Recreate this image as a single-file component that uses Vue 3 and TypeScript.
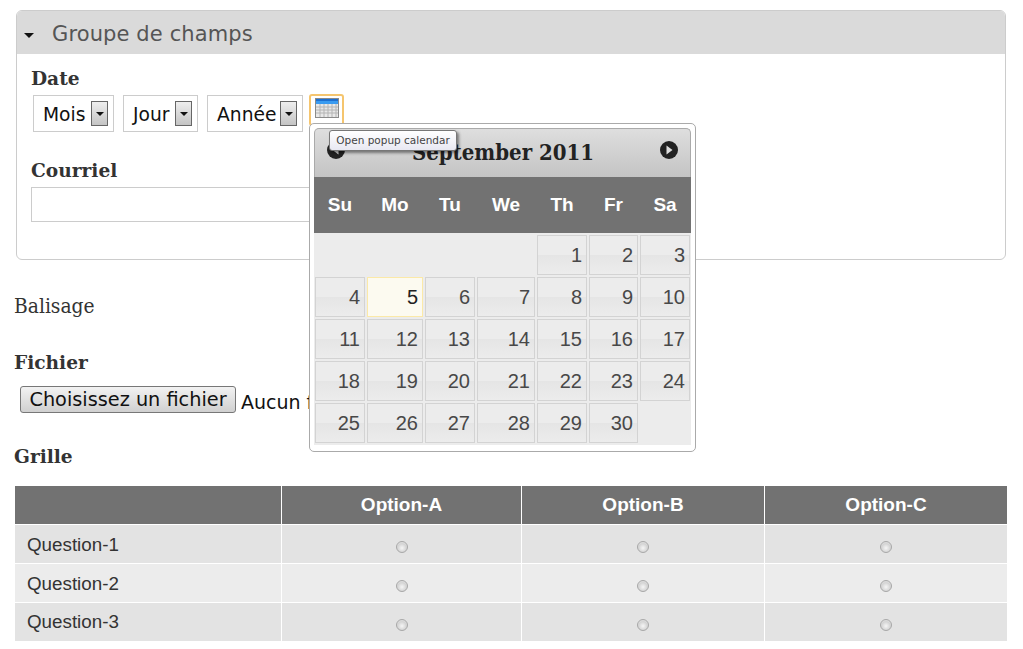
<script setup lang="ts">
const selects = ['Mois', 'Jour', 'Année']
const weekDays = ['Su', 'Mo', 'Tu', 'We', 'Th', 'Fr', 'Sa']
const leading = [1, 2, 3, 4]
const days = Array.from({ length: 30 }, (_, i) => i + 1)
const options = ['Option-A', 'Option-B', 'Option-C']
const questions = ['Question-1', 'Question-2', 'Question-3']
</script>

<template>
  <div class="page">
    <section class="group">
      <header class="group-head">
        <span class="caret"></span>
        <span class="group-title">Groupe de champs</span>
      </header>
      <div class="group-body">
        <div class="label date-label">Date</div>
        <div class="date-row">
          <div v-for="s in selects" :key="s" class="select">
            <span class="select-text">{{ s }}</span>
            <span class="select-btn"><i></i></span>
          </div>
          <button class="cal-btn" type="button" aria-label="Open popup calendar">
            <svg width="24" height="20" viewBox="0 0 24 20">
              <rect x="0.5" y="0.5" width="23" height="19" fill="#e8e8e8" stroke="#8a8a8a" />
              <rect x="1" y="1" width="22" height="5" fill="#3a9bf0" />
              <rect x="1" y="1" width="22" height="2" fill="#1c6fd0" />
              <path
                d="M5 6v13M9 6v13M13 6v13M17 6v13M21 6v13M1 9h22M1 12h22M1 15h22"
                stroke="#b4b4b4"
                fill="none"
              />
            </svg>
          </button>
        </div>
        <div class="label mail-label">Courriel</div>
        <input class="mail" type="text" />
      </div>
    </section>

    <div class="markup">Balisage</div>

    <div class="label file-label">Fichier</div>
    <div class="file-row">
      <button class="file-btn" type="button">Choisissez un fichier</button>
      <span class="file-name">Aucun fichier choisi</span>
    </div>

    <div class="label grid-label">Grille</div>
    <table class="grid">
      <thead>
        <tr>
          <th class="c0"></th>
          <th v-for="o in options" :key="o">{{ o }}</th>
        </tr>
      </thead>
      <tbody>
        <tr v-for="q in questions" :key="q">
          <td class="question">{{ q }}</td>
          <td v-for="o in options" :key="o" class="radio-cell">
            <input type="radio" :name="q" />
          </td>
        </tr>
      </tbody>
    </table>

    <div class="popup">
      <div class="cal-head">
        <svg class="nav prev" width="18" height="18" viewBox="0 0 18 18">
          <circle cx="9" cy="9" r="9" fill="#222" />
          <path d="M11.500 4.500v9L5.500 9z" fill="#ddd" />
        </svg>
        <span class="cal-title">September 2011</span>
        <svg class="nav next" width="18" height="18" viewBox="0 0 18 18">
          <circle cx="9" cy="9" r="9" fill="#222" />
          <path d="M6.500 4.500v9l6-4.500z" fill="#ddd" />
        </svg>
      </div>
      <div class="cal-dow">
        <span v-for="d in weekDays" :key="d">{{ d }}</span>
      </div>
      <div class="cal-days">
        <span v-for="n in leading" :key="'e' + n"></span>
        <span v-for="d in days" :key="d" class="day" :class="{ today: d === 5 }">{{ d }}</span>
      </div>
    </div>

    <div class="tooltip">Open popup calendar</div>
  </div>
</template>

<style>
html,
body {
  background: #fff;
  overflow: hidden;
}
</style>

<style scoped>
.page {
  position: relative;
  width: 1023px;
  height: 649px;
  overflow: hidden;
  padding: 10px 0 0 14px;
  box-sizing: border-box;
  color: #333;
  font-family: 'DejaVu Serif Condensed', 'DejaVu Serif', serif;
}

.group {
  box-sizing: border-box;
  width: 990px;
  height: 250px;
  margin-left: 2px;
  border: 1px solid #ccc;
  border-radius: 6px;
  overflow: hidden;
}

.group-head {
  display: flex;
  align-items: center;
  height: 43px;
  background: #dadada;
}

.caret {
  width: 0;
  height: 0;
  margin: 5px 0 0 7px;
  border: 5px solid transparent;
  border-top: 5px solid #111;
  border-bottom: 0;
}

.group-title {
  margin: 2px 0 0 18px;
  font: 21px 'DejaVu Sans', sans-serif;
  letter-spacing: 0.12px;
  color: #555;
}

.group-body {
  padding: 0 0 0 14px;
}

.label {
  height: 24px;
  font-family: 'DejaVu Serif', serif;
  font-size: 18.6px;
  font-weight: 700;
  line-height: 26px;
  color: #333;
}

.date-label {
  margin-top: 12px;
}

.date-row {
  display: flex;
  align-items: flex-start;
  margin: 5px 0 0 2px;
}

.select {
  display: flex;
  align-items: center;
  justify-content: space-between;
  box-sizing: border-box;
  height: 37px;
  padding: 0 5px 0 9px;
  margin-right: 9px;
  border: 1px solid #ccc;
  font: 18.7px 'DejaVu Sans', sans-serif;
  color: #111;
}

.select-text {
  padding-top: 2px;
}

.select:nth-child(1) {
  width: 81px;
}

.select:nth-child(2) {
  width: 75px;
}

.select:nth-child(3) {
  width: 96px;
}

.select-btn {
  display: flex;
  align-items: center;
  justify-content: center;
  box-sizing: border-box;
  width: 17px;
  height: 25px;
  border: 1px solid #666;
  background: linear-gradient(#eee, #c4c4c4);
}

.select-btn i {
  width: 0;
  height: 0;
  border: 4px solid transparent;
  border-top: 4px solid #111;
  border-bottom: 0;
}

.cal-btn {
  display: flex;
  align-items: center;
  justify-content: center;
  box-sizing: border-box;
  width: 35px;
  height: 32px;
  margin: -1px 0 0 -3px;
  padding: 0 0 4px;
  border: 2px solid #f5c56e;
  border-radius: 3px;
  background: #fff;
}

.mail-label {
  margin-top: 26px;
}

.mail {
  display: block;
  box-sizing: border-box;
  width: 500px;
  height: 35px;
  margin-top: 5px;
  border: 1px solid #ccc;
  background: #fff;
}

.markup {
  margin-top: 33px;
  font-size: 20.8px;
  line-height: 26px;
}

.file-label {
  margin-top: 31px;
}

.file-row {
  display: flex;
  align-items: center;
  margin: 11px 0 0 6px;
}

.file-btn {
  box-sizing: border-box;
  width: 216px;
  height: 27px;
  padding: 0;
  border: 1px solid #777;
  border-radius: 3px;
  background: linear-gradient(#f2f2f2, #d0d0d0);
  font: 19.3px 'DejaVu Sans', sans-serif;
  color: #111;
}

.file-name {
  margin: 6px 0 0 5px;
  font: 19px 'DejaVu Sans', sans-serif;
  color: #111;
}

.grid-label {
  margin-top: 31px;
}

.grid {
  width: 992px;
  margin: 18px 0 0 1px;
  border-collapse: collapse;
  table-layout: fixed;
  font-family: 'Liberation Sans', Arial, sans-serif;
}

.grid th {
  height: 38px;
  padding: 0;
  border-left: 1px solid #fff;
  background: #727272;
  color: #fff;
  font-size: 19px;
  font-weight: 700;
}

.grid th.c0 {
  width: 266px;
  border-left: 0;
}

.grid th:nth-child(2) {
  width: 239px;
}

.grid th:nth-child(3) {
  width: 242px;
}

.grid tbody tr {
  height: 39px;
}

.grid tbody tr:last-child {
  height: 38px;
}

.grid td {
  padding: 0;
  border-top: 1px solid #fff;
  border-left: 1px solid #fff;
  background: #e3e3e3;
}

.grid tr:nth-child(2) td {
  background: #ececec;
}

.grid td.question {
  padding: 1px 0 0 12px;
  border-left: 0;
  font-size: 18.8px;
  line-height: 22px;
  color: #333;
}

.radio-cell {
  padding-top: 6px !important;
}

.radio-cell input {
  appearance: none;
  display: block;
  box-sizing: border-box;
  width: 12px;
  height: 12px;
  margin: 0 auto;
  border: 1px solid #a8a8a8;
  border-radius: 50%;
  background: radial-gradient(circle at 50% 60%, #f6f6f6 0, #d4d4d4 55%, #ececec 100%);
}

.popup {
  position: absolute;
  left: 309px;
  top: 123px;
  box-sizing: border-box;
  width: 387px;
  height: 329px;
  padding: 4px;
  border: 1px solid #aaa;
  border-radius: 5px;
  background: #fff;
}

.cal-head {
  display: flex;
  align-items: center;
  justify-content: space-between;
  box-sizing: border-box;
  width: 377px;
  height: 49px;
  padding: 0 12px 6px 12px;
  border: 1px solid #aaa;
  border-bottom: 0;
  border-radius: 5px 5px 0 0;
  background: linear-gradient(#dedede, #c4c4c4);
}

.cal-title {
  padding: 4px 0 0 1px;
  font-size: 22px;
  font-weight: 700;
  color: #222;
}

.cal-dow {
  display: grid;
  grid-template-columns: 52px 58px 52px 60px 52px 51px 52px;
  align-items: center;
  width: 377px;
  height: 56px;
  background: #727272;
  color: #fff;
  font: 700 19px 'Liberation Sans', Arial, sans-serif;
  text-align: center;
}

.cal-days {
  display: grid;
  grid-template-columns: 50px 56px 50px 58px 50px 49px 50px;
  grid-auto-rows: 40px;
  gap: 2px;
  box-sizing: border-box;
  width: 377px;
  height: 212px;
  padding: 2px 1px;
  background: #ececec;
  font: 20px 'Liberation Sans', Arial, sans-serif;
}

.day {
  box-sizing: border-box;
  padding-right: 4px;
  border: 1px solid #d3d3d3;
  background: linear-gradient(#ececec 50%, #e5e5e5 50%, #ececec 100%);
  color: #484848;
  line-height: 38px;
  text-align: right;
}

.day.today {
  border-color: #fbe9a8;
  background: #fcfaf0;
  color: #222;
}

.tooltip {
  position: absolute;
  left: 329px;
  top: 130px;
  box-sizing: border-box;
  width: 128px;
  height: 21px;
  border: 1px solid #777;
  border-radius: 3px;
  background: linear-gradient(#fff, #e8e8f2);
  box-shadow: 2px 2px 3px rgba(0, 0, 0, 0.45);
  color: #444;
  font: 10.5px/19px 'DejaVu Sans', sans-serif;
  text-align: center;
  white-space: nowrap;
}
</style>
